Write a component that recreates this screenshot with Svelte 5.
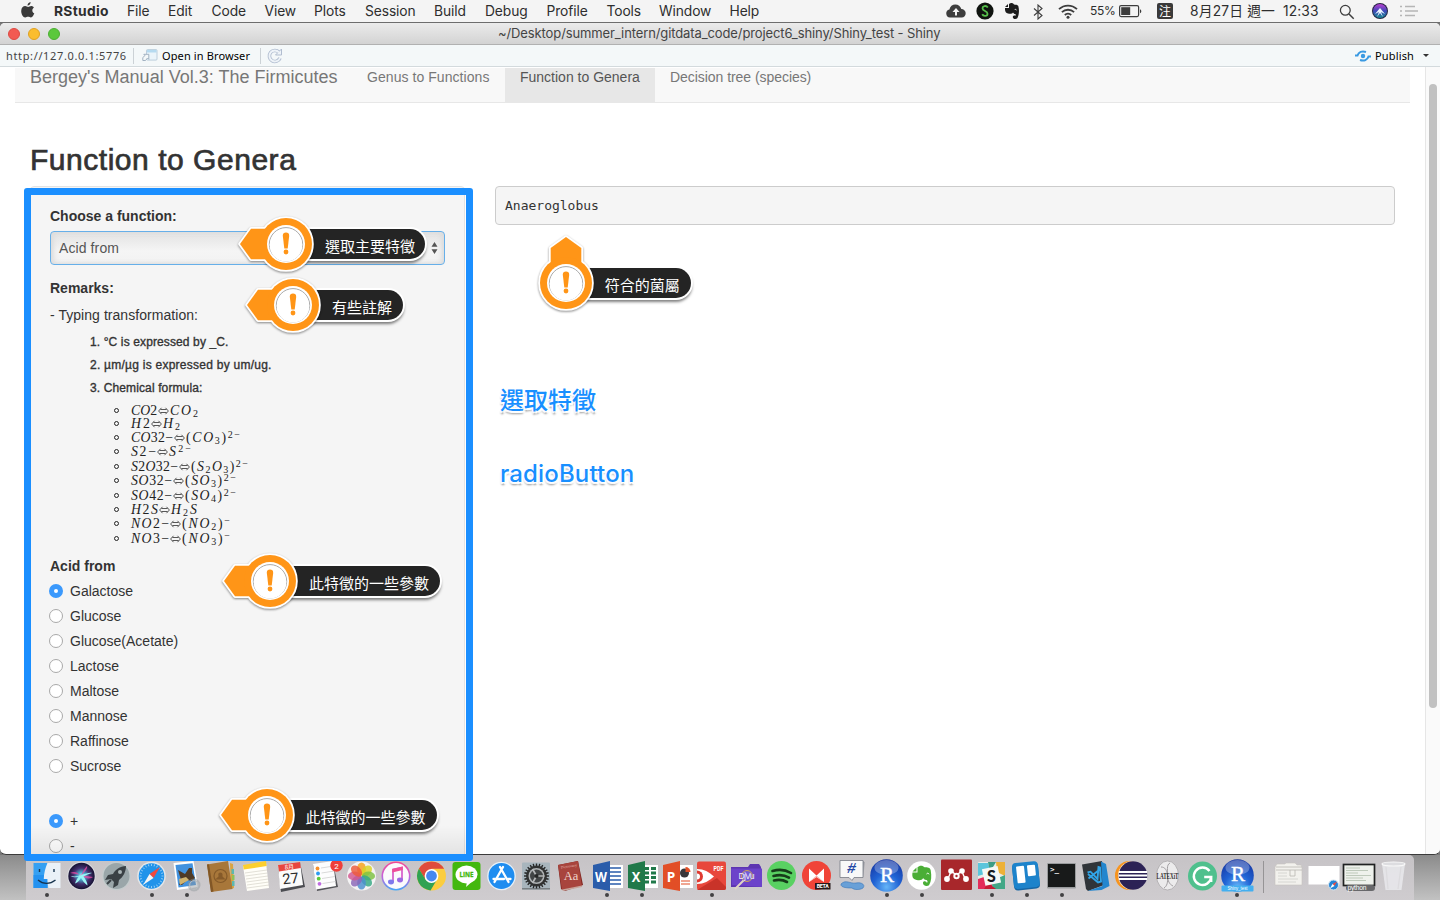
<script>
  const menus = [
    ['RStudio', 73], ['File', 41], ['Edit', 43.5], ['Code', 53], ['View', 49.5], ['Plots', 51],
    ['Session', 69], ['Build', 51], ['Debug', 61.5], ['Profile', 60], ['Tools', 52.5], ['Window', 70.5], ['Help', 40]
  ];
  const formulas = [
    { left: 'CO2', w: 26, right: 'CO_2', rw: 28, h: 13 },
    { left: 'H2', w: 19, right: 'H_2', rw: 17, h: 13.5 },
    { left: 'CO32−', w: 42, right: '(CO_3)^2^−', rw: 54, h: 14 },
    { left: 'S2−', w: 25, right: 'S^2^−', rw: 22, h: 14.5 },
    { left: 'S2O32−', w: 47, right: '(S_2O_3)^2^−', rw: 57, h: 14 },
    { left: 'SO32−', w: 41, right: '(SO_3)^2^−', rw: 51, h: 15 },
    { left: 'SO42−', w: 41, right: '(SO_4)^2^−', rw: 51, h: 14.5 },
    { left: 'H2S', w: 27, right: 'H_2S', rw: 26, h: 14 },
    { left: 'NO2−', w: 38, right: '(NO_2)^−', rw: 48, h: 14.5 },
    { left: 'NO3−', w: 38, right: '(NO_3)^−', rw: 48, h: 15 }
  ];
  const tokens = (s) =>
    [...s.matchAll(/([_^]?)(.)/gu)].map((m) => ({
      t: m[2],
      k: m[1] === '_' ? 'sub' : m[1] === '^' ? 'sup' : /[A-Z]/.test(m[2]) ? 'it' : 'up'
    }));
  const sugars = ['Galactose', 'Glucose', 'Glucose(Acetate)', 'Lactose', 'Maltose', 'Mannose', 'Raffinose', 'Sucrose'];
  let sugar = $state('Galactose');
  let sign = $state('+');
  const notes = [
    { x: 286, y: 244, text: '選取主要特徵', w: 131 },
    { x: 293, y: 305, text: '有些註解', w: 102 },
    { x: 270, y: 581, text: '此特徵的一些參數', w: 162 },
    { x: 266.5, y: 814.5, text: '此特徵的一些參數', w: 162 },
    { x: 565.7, y: 282.5, text: '符合的菌屬', w: 117, up: true }
  ];

  const siri = (id) => `<defs><radialGradient id="${id}"><stop offset="0" stop-color="#e8ffff"/><stop offset=".25" stop-color="#49b8d6"/><stop offset=".6" stop-color="#43306f"/><stop offset="1" stop-color="#161232"/></radialGradient></defs>`;
  const rball = (id, y, extra = '') => `<defs><radialGradient id="${id}" cx=".5" cy=".85" r=".9"><stop offset="0" stop-color="#65b5f8"/><stop offset=".45" stop-color="#2063d4"/><stop offset="1" stop-color="#15309b"/></radialGradient></defs><circle cx="17.500" cy="20.500" r="16.300" fill="url(#${id})"/><ellipse cx="17.500" cy="12.500" rx="12" ry="7.500" fill="#fff" opacity=".28"/><text x="18" y="${y}" font-size="21" font-family="Liberation Serif" fill="#fff" stroke="#fff" stroke-width=".4" text-anchor="middle">R</text>${extra}`;
  const office = (c, l, body) => `<path d="M17 10h17v23H17z" fill="#fff"/>${body}<path d="M4 10l17-4v30L4 33z" fill="${c}"/><text x="12" y="27" font-size="15" font-weight="700" font-family="Open Sans" fill="#fff" text-anchor="middle" textLength="${l === 'W' ? 12 : 8.5}" lengthAdjust="spacingAndGlyphs">${l}</text>`;
  const petals = ['#f7a21b', '#d9d425', '#7cc142', '#35a884', '#4a8fd0', '#8a66b8', '#d3558f', '#ee5a3a']
    .map((c, i) => `<ellipse cx="17.500" cy="14" rx="4.400" ry="6.600" fill="${c}" opacity=".82" transform="rotate(${i * 45} 17.500 21)"/>`).join('');
  const teeth = Array.from({ length: 24 }, (_, i) => `<path d="M16.800 8.500h1.400v3h-1.400z" transform="rotate(${i * 15} 17.500 21)"/>`).join('');
  const ticks = Array.from({ length: 24 }, (_, i) => `<path d="M17.500 9v2" transform="rotate(${i * 15} 17.500 21)"/>`).join('');

  const apps = [
    { name: 'Finder', run: true, svg: `<path d="M4.500 8h14v25h-14z" fill="#35a0f2"/><path d="M4.500 20h14v13h-14z" fill="#2492f0"/><path d="M18.500 8h13v25H19.500c-.8-3-1-6-1-9h-3.700c.1-6 1.500-11 3.700-16z" fill="#eaf1f8"/><path d="M10.500 14v3M25 14v3" stroke="#17344f" stroke-width="1.400"/><path d="M9 25c5 4.500 12 4.500 17.500 0" fill="none" stroke="#17344f" stroke-width="1.300"/>` },
    { name: 'Siri', svg: `${siri('s1')}<circle cx="17.500" cy="21" r="14.300" fill="#d9d9df"/><circle cx="17.500" cy="21" r="13.200" fill="url(#s1)"/><path d="M6 18c7-3 9 2 11 3 4-4 7-8 6-10-3 3-5 7-6 10 5 3 10 3 12 1" fill="#e24aa2" opacity=".8"/><path d="M6.500 21c5 1 8 0 11-1 4-1 8-3 10.500-2-3 1-6 2-8.500 3.500 2 3 4 6 4 9-3-2-5-5-6.500-8-1 2-3 5-6 6 1-3 2-5 4-7-3 1-6 1-8.500-.5z" fill="#9af5f5"/>` },
    { name: 'Launchpad', svg: `<circle cx="17.500" cy="21" r="14.300" fill="#c4cccd"/><circle cx="17.500" cy="21" r="13" fill="#9aa6a9"/><path d="M27 11c-6 0-11 4-13 8l-5 1-3 5 6-1 3 3-1 6 5-3 1-5c4-3 7-8 7-14z" fill="#3a4145"/><circle cx="21" cy="17" r="2" fill="#a9b4b6"/><path d="M12 25l-4 4" stroke="#3a4145" stroke-width="2"/>` },
    { name: 'Safari', run: true, svg: `<circle cx="17.500" cy="21" r="14.300" fill="#e4e6e8"/><circle cx="17.500" cy="21" r="12.800" fill="#2093ea"/><g stroke="#bfe2fa" stroke-width=".7">${ticks}</g><path d="M26 12l-6.500 11-4-4z" fill="#f2493d"/><path d="M9 30l6.500-11 4 4z" fill="#f5f5f5"/>` },
    { name: 'Mail', run: true, svg: `<path d="M4.500 8l20-2L29 32 8 35z" fill="#fff"/><path d="M6.500 10l17-1.800L27 30l-17.500 2.500z" fill="#4392de"/><path d="M9 15l7 4 4-6 3 0 0 5 3 5-3 3-5-1-5 5-3 0 2-5z" fill="#4f3a26"/><path d="M10 24l7-2 3 3-9 5z" fill="#d0b36f"/><circle cx="25" cy="30" r="6.500" fill="#8e969c" opacity=".45"/><circle cx="25" cy="30" r="4.300" fill="none" stroke="#b9bdc0" stroke-width="1"/>` },
    { name: 'Contacts', svg: `<path d="M26 8l3 1 1 24-3 1z" fill="#d9a441"/><path d="M27.500 14h2.500v5h-2.500zM28 26h2.500v5H28z" fill="#5cb8b0"/><path d="M28 20h2.500v5H28z" fill="#8fc15a"/><path d="M3 9.500L24 6l4.500 28L7 37z" fill="#a8773a"/><path d="M3 9.500l2-.3L9.500 36.600 7 37z" fill="#825726"/><circle cx="16.500" cy="21" r="6.500" fill="none" stroke="#855a29" stroke-width="1.200"/><path d="M12 24.500c0-2 3-2 2.500-4-1.500-4 5-4 4 0-.5 2 2.500 2 2.500 4z" fill="#855a29"/>` },
    { name: 'Notes', svg: `<path d="M4 11l23-3.500L30 33 8 36z" fill="#fffef8"/><path d="M4 10l23-4 .7 5L4.700 14.500z" fill="#fccf2e"/><path d="M6 18l22-3M6.500 21l22-3M7 24l22-3M7.500 27l22-3M8 30l22-3M8 33l22-3" stroke="#d5d2c8" stroke-width=".7"/>` },
    { name: 'Calendar', svg: `<path d="M4 11l22-4 5 25-24 5z" fill="#4c4d52"/><path d="M4 10l22-3 3 23-23 4z" fill="#fbfbfb"/><path d="M4 10l22-3 .8 6L5 16.500z" fill="#e8463e"/><text x="15.500" y="14" font-size="6" font-family="Noto Sans CJK TC" fill="#fff" text-anchor="middle" transform="rotate(-7 15.500 13)">8月</text><text x="16.500" y="28.500" font-size="14.500" font-family="Roboto" fill="#2b2b2b" text-anchor="middle" transform="rotate(-6 16.500 23)">27</text>` },
    { name: 'Reminders', svg: `<path d="M4 10l20-3 5 25-21 4z" fill="#55565a"/><path d="M4 9l20-3 3 25-20 3.500z" fill="#fdfdfd"/><path d="M12 13l13-2M12.500 18l13-2M13 23.500l13-2M13.500 28.500l13-2" stroke="#cfcfcf" stroke-width=".8"/><circle cx="8.500" cy="13.500" r="1.900" fill="#f7902b"/><circle cx="9" cy="18.500" r="1.900" fill="#2c9bf1"/><circle cx="9.700" cy="23.700" r="1.900" fill="#5dc93c"/><circle cx="10.500" cy="28.800" r="1.900" fill="#bf6be0"/><circle cx="27.500" cy="10.500" r="6.200" fill="#ee3f3b"/><text x="27.500" y="13.500" font-size="8" font-family="Roboto" fill="#fff" text-anchor="middle">2</text>` },
    { name: 'Photos', svg: `<circle cx="17.500" cy="21" r="14.500" fill="#f4f3f4"/>${petals}` },
    { name: 'iTunes', svg: `<defs><linearGradient id="it" x2="0" y2="1"><stop stop-color="#f5498f"/><stop offset=".5" stop-color="#c85edc"/><stop offset="1" stop-color="#45a9f5"/></linearGradient></defs><circle cx="17" cy="21" r="14.500" fill="url(#it)"/><circle cx="17" cy="21" r="12.900" fill="#fbfafc"/><path d="M14 27V14.500L23 12.500V25" fill="none" stroke="#d65ac9" stroke-width="1.700"/><path d="M13.200 14l10.600-2.400v3.400L13.200 17.400z" fill="#ee4f98"/><ellipse cx="12" cy="27" rx="3" ry="2.400" fill="#7f78ec"/><ellipse cx="21" cy="25" rx="3" ry="2.400" fill="#9c69e2"/>` },
    { name: 'Chrome', svg: `<circle cx="17.500" cy="21" r="14.500" fill="#fbcd3f"/><path d="M4.900 13.700a14.500 14.500 0 0 1 25.200 0H17.500L11 24z" fill="#df4b3c"/><path d="M4.900 13.700a14.500 14.500 0 0 0 11.600 21.700L23 24.500l-5.500 3-6-3z" fill="#30a253"/><circle cx="17.500" cy="21" r="6.900" fill="#fff"/><circle cx="17.500" cy="21" r="5.400" fill="#4688f1"/>` },
    { name: 'LINE', svg: `<rect x="3.500" y="7" width="28" height="28" rx="3" fill="#43b80f"/><ellipse cx="17.500" cy="19.500" rx="11" ry="9" fill="#fff"/><path d="M13 26l5 1-1 5 9-8" fill="#fff"/><text x="17.500" y="22" font-size="7" font-weight="700" font-family="Open Sans" fill="#43b80f" stroke="#43b80f" stroke-width=".3" text-anchor="middle" textLength="14" lengthAdjust="spacingAndGlyphs">LINE</text>` },
    { name: 'App Store', svg: `<circle cx="17.500" cy="21" r="14.300" fill="#e8f1f8"/><circle cx="17.500" cy="21" r="13" fill="#1f8df0"/><path d="M19 12l-8.500 15M16 12l8.500 15M9.500 24H20M22.500 24h4" stroke="#fff" stroke-width="2.300" stroke-linecap="round"/>` },
    { name: 'System Preferences', svg: `<rect x="3" y="7.500" width="28" height="27" rx="1" fill="#a8b5bd"/><rect x="3" y="33" width="28" height="1.500" fill="#787e82"/><g fill="#252626">${teeth}</g><circle cx="17.500" cy="21" r="10.500" fill="#303131"/><circle cx="17.500" cy="21" r="8" fill="#aeb2b4"/><circle cx="17.500" cy="21" r="6.500" fill="#424546"/><path d="M17.500 21h8M17.500 21l-4-7M17.500 21l-4 7" stroke="#b4b6b7" stroke-width="1.700"/><circle cx="17.500" cy="21" r="2" fill="#272828"/>` },
    { name: 'Dictionary', svg: `<path d="M4 10l20-4 5 24-18 6-4-2z" fill="#7e2520"/><path d="M4 10l20-4 4 25-20 4z" fill="#a8443d"/><path d="M8 34.500l20-4v1.500L9 36z" fill="#c9a59c"/><text x="17" y="25" font-size="12.500" font-family="Liberation Serif" fill="#f0d6cd" text-anchor="middle">Aa</text><text x="15" y="12.500" font-size="3.800" font-family="Liberation Serif" fill="#e6bdb5" text-anchor="middle" transform="rotate(-9 15 12)">Dictionary</text>` },
    { name: 'Word', run: true, svg: office('#2a5caa', 'W', '<path d="M20 13h12M20 17h12M20 21h12M20 25h12M20 29h12" stroke="#2a5caa" stroke-width="1.500"/>') },
    { name: 'Excel', run: true, svg: office('#21794a', 'X', '<path d="M21 12h4v3h-4zM27 12h5v3h-5zM21 16.500h4v3h-4zM27 16.500h5v3h-5zM21 21h4v3h-4zM27 21h5v3h-5zM21 25.500h4v3h-4zM27 25.500h5v3h-5z" fill="#21794a"/>') },
    { name: 'PowerPoint', svg: office('#e24e26', 'P', '<circle cx="25.500" cy="18" r="4.500" fill="#38363a"/><path d="M26.500 17v-5a5 5 0 0 1 5 5z" fill="#e24e26"/><path d="M22 26h9M22 29h9" stroke="#e24e26" stroke-width="1.200"/>') },
    { name: 'PDF Expert', run: true, svg: `<rect x="3" y="6.500" width="29" height="28.500" rx="2" fill="#e8473b"/><path d="M3 35l20-12 9 9v1a2 2 0 0 1-2 2z" fill="#c93329"/><path d="M3 14c7 0 12 3 17 7.500C15 26 10 29 3 29z" fill="#fff"/><path d="M3 15.500a6 6 0 0 1 0 12z" fill="#e03a31"/><path d="M3 18.500a3 3 0 0 1 0 6z" fill="#fff"/><text x="24.500" y="15.500" font-size="7" font-weight="700" font-family="Roboto" fill="#fff" text-anchor="middle" textLength="10" lengthAdjust="spacingAndGlyphs">PDF</text>` },
    { name: 'DjView', svg: `<path d="M2 12h17l2-3h9l2 3v20H2z" fill="#5d35b1"/><path d="M2 13.500h31v18.500L3 30z" fill="#6c43ca"/><path d="M15 25L6 34" stroke="#e1d5c4" stroke-width="2"/><ellipse cx="18" cy="21" rx="5.500" ry="5.500" fill="#725bd7" stroke="#c9a45c"/><text x="17.500" y="24" font-size="8.500" font-family="Liberation Sans" fill="#f1ecf6" text-anchor="middle" textLength="16">DjVu</text>` },
    { name: 'Spotify', svg: `<circle cx="17.500" cy="20.500" r="14.500" fill="#59d162"/><path d="M8.500 16c6.500-2 13-1.300 18.500 2M9.500 21c5.500-1.500 11-1 15.500 1.700M10 25.500c5-1.200 9-.8 13 1.500" fill="none" stroke="#163d1a" stroke-width="2.600" stroke-linecap="round"/>` },
    { name: 'Mosaic', svg: `<circle cx="17.500" cy="20.500" r="14.500" fill="#f04438"/><path d="M10 27V13.500l7.500 7 7.500-7V27l-7.500-5z" fill="#fff"/><path d="M10 27l7.500-6.500L25 27l-7.500-5z" fill="#f5b3ae"/><rect x="16" y="28" width="15.500" height="6.500" fill="#27191a"/><text x="23.700" y="33.200" font-size="5.300" font-weight="700" font-family="Roboto" fill="#fff" text-anchor="middle" textLength="12">BETA</text>` },
    { name: 'Irc', svg: `<path d="M6 5.500h23v17h-9l-2 3-3-3H6z" fill="#f8f8f8" stroke="#777b85" stroke-width=".8"/><path d="M29 5.500l1.500 2-1 15z" fill="#8b8e96"/><text x="17.500" y="18" font-size="15" font-weight="700" font-style="italic" font-family="Liberation Mono" fill="#2348a5" text-anchor="middle">#</text><path d="M7 29c5-5 9 0 15-1 4-1 10 1 7 5-3 2-9 2-11 0-3 0-12 0-11-4z" fill="#69a0d7" stroke="#3573b8" stroke-width=".6"/>` },
    { name: 'RStudio', run: true, svg: rball('rb1', 27) },
    { name: 'Evernote', run: true, svg: `<circle cx="17.500" cy="20.500" r="14.300" fill="#fff"/><path d="M8.500 17.500h5v-5.200c2-2.300 5.500-2 7 0 3 0 5.500 0 6.200 3 1 5.700.8 11-1.700 15-2 1.200-6.500.8-6-2.800.5-2 4-1.400 3.800.6 1.500-1 .5-3-.6-3-1.700-.2-2.500-1-3-2-1 2.500-4 2.500-6.500 1.900-4.200-1-4.800-3.500-4.200-7.500z" fill="#4aae36"/><path d="M8.500 16.500l4-4v4z" fill="#4aae36"/><path d="M22.500 19c.8-1.200 2.200-1 2.500.3" stroke="#fff" fill="none"/>` },
    { name: 'Mendeley', svg: `<rect x="2" y="4.500" width="31" height="30.500" rx="1" fill="#a8272b"/><path d="M8 24c2.500-2 3-5 4-8.500l5.500 5 5.500-5c1 3.500 1.500 6.500 4 8.500" stroke="#fff" stroke-width="1.400" fill="none"/><g fill="#fff"><circle cx="12" cy="16" r="2.800"/><circle cx="23" cy="16" r="2.800"/><circle cx="17.500" cy="21" r="3.200"/><circle cx="8" cy="24" r="2.900"/><circle cx="27" cy="24" r="2.900"/><circle cx="17.500" cy="21" r="1.200" fill="#a8272b"/></g>` },
    { name: 'Slack', run: true, svg: `<rect x="4" y="7" width="27" height="27" rx="1" fill="#e9ece8"/><path d="M4 8h10l3 9-13 4z" fill="#5bc5dc"/><path d="M14 7h8l-6 10z" fill="#3e9d86"/><path d="M22 7h9v14l-8-4z" fill="#edb137"/><path d="M4 24l12-4 3 14H4z" fill="#e32c59"/><path d="M19 34l-2-8 14-6v14z" fill="#43a787"/><path d="M10 34l4-6 8 6z" fill="#c61c34"/><rect x="9.500" y="12.500" width="16" height="17" fill="#f6f8f6" transform="rotate(-12 17 21)"/><text x="17.500" y="26.500" font-size="16" font-weight="900" font-family="Lato" fill="#18191d" text-anchor="middle">S</text>` },
    { name: 'Trello', run: true, svg: `<g transform="rotate(-6 17.500 21)"><rect x="4" y="8.500" width="26" height="26" rx="4" fill="#1766a4"/><rect x="4" y="7" width="26" height="26" rx="4" fill="#1d83cb"/><rect x="8" y="10.500" width="8" height="17" rx="1" fill="#fff"/><rect x="19" y="10.500" width="8" height="11" rx="1" fill="#fff"/></g>` },
    { name: 'Terminal', run: true, svg: `<rect x="3" y="8" width="29" height="25.500" rx="1" fill="#999b9d"/><rect x="4" y="9" width="27" height="23" fill="#181a1a"/><text x="6" y="16.500" font-size="7.500" font-weight="700" font-family="DejaVu Sans Mono" fill="#fff">&gt;_</text>` },
    { name: 'VS Code', svg: `<path d="M3 9.500L23 6l2 24-16 6-2-2z" fill="#303439"/><path d="M22 6.500l5 2.500 3.500 22-8 4-14 1 15-5z" fill="#2386ce"/><path d="M8.500 17.500l3-.8 7 7.300 1-12 1.500.5 1 14-3 1-10-8.500M20 15l-10.500 8.500" fill="none" stroke="#31a4e7" stroke-width="1.900"/>` },
    { name: 'Eclipse', svg: `<circle cx="15.500" cy="20.500" r="14.500" fill="#f7941e"/><circle cx="18.500" cy="20.500" r="14.500" fill="#fff" opacity=".75"/><circle cx="19" cy="20.500" r="14.300" fill="#2c2255"/><path d="M5 17h28M4.700 20.500h28.600M5 24h28" stroke="#fff" stroke-width="1.800"/>` },
    { name: 'LaTeXiT', svg: `<ellipse cx="17.500" cy="20.500" rx="11" ry="14.500" fill="#ecebec" stroke="#aaa7aa" stroke-width=".8"/><path d="M20 8c-4 2-2 8-2.500 12.500M11 12c4 0 6 3 6.500 8.500M14 33c3-2 4-5 3.500-12.500M23 31c-4-2-5-5-5.500-10" stroke="#a29fa2" fill="none"/><text x="17.500" y="24" font-size="7.500" font-weight="700" font-family="Liberation Serif" fill="#302e30" text-anchor="middle" textLength="22" lengthAdjust="spacingAndGlyphs">LATEXiT</text>` },
    { name: 'Grammarly', svg: `<circle cx="17.500" cy="21" r="14.500" fill="#4fc08d"/><path d="M24.500 16a8.700 8.700 0 1 0 1.700 6h-7M26.200 22v5" fill="none" stroke="#fff" stroke-width="2.400"/>` },
    { name: 'Shiny_test', run: true, svg: rball('rb2', 26, '<rect x="1.500" y="30.500" width="32" height="6" rx="1" fill="#43aff0"/><text x="17.500" y="35.300" font-size="5.500" font-family="Liberation Sans" fill="#fff" text-anchor="middle" textLength="20" lengthAdjust="spacingAndGlyphs">Shiny_test</text>') }
  ];
  const files = [
    { name: 'Documents', svg: `<path d="M4 12l2-3h8l1-1h9l2 2h4l1 2v18H4z" fill="#f2f1ed" stroke="#c7c5c0" stroke-width=".6"/><path d="M5 12h26M5 15h26M19 15v6h5v-6" stroke="#b9b7b1" stroke-width=".8" fill="none"/><path d="M7 18h9M7 21h9M7 24h20M7 27h18" stroke="#d3d4cf" stroke-width=".9"/>` },
    { name: 'Browser window', svg: `<rect x="2.500" y="11" width="31" height="18.500" fill="#fff"/><circle cx="27.500" cy="30" r="5" fill="#2486d8" stroke="#d4e3ed"/><path d="M31 26.500l-2.500 4.500-2-2z" fill="#f04a3e"/><path d="M24 33.500l2.500-4.500 2 2z" fill="#fff"/>` },
    { name: 'python', svg: `<rect x="2.500" y="9.500" width="31" height="21" fill="#eef1ec" stroke="#202222" stroke-width="1.700"/><path d="M5 13h14M5 15.500h22M5 18h12M5 20.500h25M5 23h17M5 25.500h20" stroke="#a9b8a6" stroke-width=".7"/><rect x="5" y="30" width="29" height="6" rx="3" fill="#68686b"/><text x="16" y="35" font-size="6.700" font-family="Liberation Sans" fill="#fff" text-anchor="middle" textLength="19">python</text>` },
    { name: 'Trash', svg: `<path d="M6 9h23l-3.500 26h-16z" fill="#e6e6e9" opacity=".95"/><path d="M10 12l2 22M25 12l-3 22" stroke="#dcdbde" stroke-width="1.300"/><ellipse cx="17.500" cy="9" rx="11.500" ry="2" fill="#dddde0" stroke="#f8f8f8" stroke-width="1.200"/>` }
  ];
</script>

{#snippet math(s)}{#each tokens(s) as p}<i class={p.k}>{p.t}</i>{/each}{/snippet}

{#snippet radio(label, on, pick)}
  <label class="radio">
    <input type="radio" checked={on} onchange={pick} />
    <span class="knob"></span>{label}
  </label>
{/snippet}

<div class="desktop">
  <header class="menubar">
    <svg class="apple" viewBox="0 0 14 17"><path fill="#3a3a3a" d="M9.600 0c.2 1.700-1.300 3.600-3.100 3.600C6.300 2 7.900.2 9.600 0zM12.900 5.700c-2.300 1.400-2 4.600.4 5.600-.5 1.500-1.800 4.200-3.400 4.200-1.100 0-1.500-.7-2.800-.7s-1.800.7-2.800.7C2.200 15.600.2 12.100.2 9c0-3.300 2-4.900 4-4.900 1.200 0 2.200.8 3 .8.7 0 1.900-.9 3.400-.8 1 .1 1.800.6 2.300 1.600z"/></svg>
    <nav class="menus">
      {#each menus as [name, w]}<span style:width="{w}px">{name}</span>{/each}
    </nav>
    <div class="status">
      <svg class="s-cloud" width="20" height="14" viewBox="0 0 20 14"><path fill="#3d3d3d" d="M4 13.500a4 4 0 0 1-.6-7.900C4 2.500 6.500.6 9.300.6c3 0 5.300 1.900 6 4.500a4.200 4.200 0 0 1 .4 8.400z"/><path fill="#f4f4f4" d="M10 4l3.500 4H11v3.500H9V8H6.500z"/></svg>
      <svg class="s-green" width="18" height="18" viewBox="0 0 18 18"><circle cx="9" cy="9" r="8.600" fill="#101410"/><path d="M11.800 5.500C10 3 6.500 4 6.500 6.300c0 3 5 2.500 5 5.400 0 2.600-4 3-5.300.6" fill="none" stroke="#57c04c" stroke-width="1.800"/></svg>
      <svg class="s-ever" width="14" height="17" viewBox="0 0 14 17"><path fill="#1c1c1c" d="M0 5h4V1c2-1.500 4-1 5 .5 2 .2 3.700.3 4.300 1.500 1.200 4.500.7 9-1 12.300-1.300 1-4.500.9-4.500-1.400 0-1.500 2-1.900 2.800-1v-2c-1.300.3-2-.6-2.600-1.500-1 1.700-3 1.600-5 1.100C.5 9.800-.2 8 0 5zM0 4l3-3v3z"/><path d="M9.500 7c.5-1 1.800-.8 2 .3" stroke="#f4f4f4" stroke-width=".8" fill="none"/></svg>
      <svg class="s-bt" width="10" height="16" viewBox="0 0 10 16"><path d="M1 4.500l8 7L5 15V1l4 3.500-8 7" fill="none" stroke="#3d3d3d" stroke-width="1.100"/></svg>
      <svg class="s-wifi" width="20" height="15" viewBox="0 0 20 15"><g fill="none" stroke="#3d3d3d" stroke-width="1.800"><path d="M1 5.200a13 13 0 0 1 18 0M3.900 8.200a8.800 8.800 0 0 1 12.200 0M6.800 11a4.700 4.700 0 0 1 6.400 0"/></g><circle cx="10" cy="13.300" r="1.500" fill="#3d3d3d"/></svg>
      <span class="pct">55%</span>
      <svg class="s-batt" width="24" height="13" viewBox="0 0 24 13"><rect x=".6" y=".6" width="19" height="11" rx="1.500" fill="none" stroke="#3d3d3d" stroke-width="1.200"/><path d="M2.200 2.200h9v7.800h-9z" fill="#3d3d3d"/><path d="M21 4.200c1.800.8 1.800 3.200 0 4z" fill="#3d3d3d"/></svg>
      <span class="ime">注</span>
      <span class="date">8月27日 週一</span>
      <span class="clock">12:33</span>
      <svg class="s-find" width="16" height="16" viewBox="0 0 16 16"><circle cx="6.300" cy="6.300" r="4.900" fill="none" stroke="#3d3d3d" stroke-width="1.300"/><path d="M10 10l4.700 4.700" stroke="#3d3d3d" stroke-width="1.500"/></svg>
      <svg class="s-siri" width="16" height="16" viewBox="0 0 16 16"><defs><linearGradient id="ms" x2="0" y2="1"><stop stop-color="#ba3ed0"/><stop offset=".5" stop-color="#3e4ab8"/><stop offset="1" stop-color="#15888f"/></linearGradient></defs><circle cx="8" cy="8" r="8" fill="#252445"/><circle cx="8" cy="8" r="7" fill="url(#ms)"/><path d="M8 5l5 6-4-2 2 5-3-4-3 4 2-5-4 2z" fill="#eaf5ff"/></svg>
      <svg class="s-list" width="18" height="12" viewBox="0 0 18 12"><path d="M0 1.500h2M5 1.500h10M0 6h2M5 6h13M0 10.500h2M5 10.500h10" stroke="#b5b5b5" stroke-width="1.500"/></svg>
    </div>
  </header>

  <section class="window">
    <div class="titlebar">
      <div class="lights"><b></b><b></b><b></b></div>
      <span>~/Desktop/summer_intern/gitdata_code/project6_shiny/Shiny_test - Shiny</span>
    </div>
    <div class="toolbar">
      <span class="url">http://127.0.0.1:5776</span>
      <span class="rule"></span>
      <svg class="openicon" width="16" height="13" viewBox="0 0 16 13"><rect x="4.500" y=".6" width="10.500" height="10.500" rx="1" fill="#eaf4fa" stroke="#b7c9d9" stroke-width=".9"/><path d="M5 1h9.500v2.500H5z" fill="#b5daf0"/><path d="M.8 11.500V8.500l2.200-2L1.800 5.300h5v5L5.500 9l-2 2.500z" fill="#f4f8f9" stroke="#9aaabb" stroke-width=".9"/></svg>
      <span class="open">Open in Browser</span>
      <span class="rule r2"></span>
      <svg class="reload" width="16" height="16" viewBox="0 0 16 16"><path d="M12 4.300A5.500 5.500 0 1 0 13 10" fill="none" stroke="#b1bdd0" stroke-width="3.600"/><path d="M14.500 1v6H8.500z" fill="#eef3f8" stroke="#b1bdd0"/><path d="M12 4.300A5.500 5.500 0 1 0 13 10" fill="none" stroke="#eef3f8" stroke-width="1.900"/></svg>
      <svg class="pubicon" width="16" height="12" viewBox="0 0 16 12"><g fill="none" stroke="#3a9ae2" stroke-width="2"><path d="M0 5.500h2.500C3.500 2 7 .6 11 2M16 6.500h-2.500c-1 3.500-4.500 4.900-8.500 3.500"/></g><circle cx="8" cy="6" r="2.200" fill="#3a9ae2"/></svg>
      <span class="publish">Publish</span>
      <span class="caret"></span>
    </div>

    <div class="page">
      <main>
        <div class="navbar">
          <span class="brand">Bergey's Manual Vol.3: The Firmicutes</span>
          <span class="tab t1">Genus to Functions</span>
          <span class="tab t2 active">Function to Genera</span>
          <span class="tab t3">Decision tree (species)</span>
        </div>
        <h2>Function to Genera</h2>
        <div class="cols">
          <div class="well">
            <strong class="lbl">Choose a function:</strong>
            <div class="select"><span>Acid from</span>
              <svg width="7" height="12" viewBox="0 0 7 12"><path d="M3.500 0l3 4.800h-6zM3.500 12l3-4.800h-6z" fill="#555"/></svg>
            </div>
            <strong class="lbl remarks">Remarks:</strong>
            <p class="typing">- Typing transformation:</p>
            <div class="steps">
              <div>1. °C is expressed by _C.</div>
              <div class="wide">2. µm/µg is expressed by um/ug.</div>
              <div>3. Chemical formula:</div>
            </div>
            <div class="formulas">
              {#each formulas as f}
                <div class="formula" style:height="{f.h}px">
                  <b class="dot"></b>
                  <span class="eq" style:width="{f.w}px">{@render math(f.left)}</span>
                  <svg width="11" height="8" viewBox="0 0 11 8"><path d="M2.500 2.500h6M2.500 5.500h6M3.500.8L.6 4l2.900 3.200M7.500.8L10.400 4 7.500 7.200" fill="none" stroke="#222" stroke-width=".75"/></svg>
                  <span class="eq" style:width="{f.rw}px">{@render math(f.right)}</span>
                </div>
              {/each}
            </div>
            <strong class="lbl acid">Acid from</strong>
            <div class="group">
              {#each sugars as s}{@render radio(s, sugar === s, () => (sugar = s))}{/each}
            </div>
            <div class="group second">
              {#each ['+', '-'] as s}{@render radio(s, sign === s, () => (sign = s))}{/each}
            </div>
          </div>
          <pre>Anaeroglobus</pre>
        </div>
      </main>
      <div class="scroll"><div class="thumb"></div></div>
    </div>
  </section>

  <footer class="dockrow">
    <div class="dock">
      {#each apps as a}
        <div class="app">
          <svg viewBox="0 0 35 38" role="img" aria-label={a.name}>{@html a.svg}</svg>
          {#if a.run}<b></b>{/if}
        </div>
      {/each}
      <span class="sep"></span>
      {#each files as a}
        <div class="app"><svg viewBox="0 0 35 38" role="img" aria-label={a.name}>{@html a.svg}</svg></div>
      {/each}
    </div>
  </footer>

  <div class="frame"></div>
  <div class="big zh">選取特徵</div>
  <div class="big en">radioButton</div>
  {#each notes as n}
    <div class="note" style:left="{n.x}px" style:top="{n.y}px">
      <div class="pill" style:width="{n.w}px"><span>{n.text}</span></div>
      <svg width="100" height="100" viewBox="-50 -50 100 100">
        <g class="shape">
          <g stroke="#fff" stroke-width="3.600" stroke-linejoin="round" fill="#fff">
            <path d="M-46 0l11-15.300H-10v30.600h-25z" transform={n.up ? 'rotate(90)' : ''} />
            <circle r="26" />
          </g>
          <path d="M-46 0l11-15.300H-10v30.600h-25z" fill="#ff9517" transform={n.up ? 'rotate(90)' : ''} />
          <circle r="26" fill="#ff9517" />
        </g>
        <circle r="19" fill="#fff" />
        <circle cy=".3" r="16.700" fill="#fff" stroke="#aaa" stroke-width="1" />
        <circle cy="1.200" r="16.300" fill="#fff" />
        <path d="M-3.200-8.300a3.200 3.200 0 0 1 6.400 0L1.700 4.500h-3.400z" fill="#ff9517" />
        <circle cy="8" r="2.400" fill="#ff9517" />
      </svg>
    </div>
  {/each}
</div>

<style>
  :global(body) { margin: 0; }
  .desktop { position: relative; width: 1440px; height: 900px; overflow: hidden; display: flex; flex-direction: column; background: #777; font-family: "Liberation Sans", "Noto Sans CJK TC", sans-serif; color: #333; }
  svg { display: block; flex: none; }
  span { white-space: nowrap; }

  .menubar { height: 22px; flex: none; display: flex; align-items: center; background: #f4f4f4; border-bottom: 1px solid #6d6d6d; box-sizing: content-box; font: 13.800px/22px Inter, "Noto Sans CJK TC", sans-serif; color: #2e2e2e; }
  .apple { width: 14px; height: 17px; margin: 0 19px 2px 21px; }
  .menus { display: flex; letter-spacing: -.1px; }
  .menus span:first-child { font-weight: 700; letter-spacing: .3px; }
  .status { margin-left: auto; display: flex; align-items: center; }
  .s-green { margin-left: 10px; }
  .s-ever { margin-left: 11px; }
  .s-bt { margin-left: 14px; margin-top: 2px; }
  .s-wifi { margin-left: 15px; }
  .pct { font-size: 12px; margin-left: 12px; width: 29px; letter-spacing: -.3px; }
  .s-batt { margin-left: 0; }
  .ime { width: 16px; height: 16px; margin-left: 14px; background: #3a3a3a; color: #fff; border-radius: 2px; font: 12px/16px "Noto Sans CJK TC", sans-serif; text-align: center; }
  .date { width: 86px; margin-left: 17px; letter-spacing: .15px; }
  .clock { width: 37px; margin-left: 7px; letter-spacing: .1px; }
  .s-find { margin-left: 19px; margin-top: 1px; }
  .s-siri { margin-left: 17px; }
  .s-list { margin: 0 22px 0 12px; }

  .window { height: 832px; flex: none; display: flex; flex-direction: column; background: #fff; border-radius: 5px 5px 6px 6px; overflow: hidden; border-bottom: 1px solid #3b3b3b; box-sizing: border-box; }
  .titlebar { height: 21px; flex: none; border-bottom: 1px solid #b1b1b1; background: linear-gradient(#ebebeb, #d3d3d3); display: flex; align-items: center; font: 13px/21px Inter, sans-serif; color: #444; }
  .lights { display: flex; gap: 8px; padding-left: 8px; width: 490px; box-sizing: border-box; }
  .lights b { width: 12px; height: 12px; box-sizing: border-box; border-radius: 50%; background: #f25a52; border: 1px solid #dc4a43; }
  .lights b:nth-child(2) { background: #fabd2f; border-color: #dfa023; }
  .lights b:nth-child(3) { background: #5bc83c; border-color: #4cae33; }
  .titlebar span { margin-left: 8px; letter-spacing: -.11px; }

  .toolbar { height: 21px; flex: none; display: flex; align-items: center; background: #f4f8f9; border-bottom: 1px solid #d3dadd; font: 11px/21px "Noto Sans", sans-serif; color: #000; }
  .url { margin-left: 6px; width: 127px; color: #444; letter-spacing: .64px; }
  .rule { width: 1px; height: 16px; background: #ccd2d6; }
  .openicon { margin-left: 8px; }
  .open { margin-left: 4px; width: 98px; letter-spacing: .12px; }
  .reload { margin-left: 6px; }
  .pubicon { margin-left: auto; }
  .publish { margin-left: 4px; width: 48px; letter-spacing: .15px; }
  .caret { border: 3px solid transparent; border-top-color: #333; border-bottom: 0; margin-right: 11px; }

  .page { flex: 1; min-height: 0; display: flex; }
  main { flex: 1; min-width: 0; padding: 1px 15px 0; overflow: hidden; }
  .scroll { width: 15px; flex: none; border-left: 1px solid #e6e6e6; background: #fafafa; padding: 17px 0 0 3px; box-sizing: border-box; }
  .thumb { width: 8px; height: 624px; border-radius: 4px; background: #c1c1c1; }

  .navbar { height: 34px; display: flex; background: #f8f8f8; border-bottom: 1px solid #e7e7e7; color: #777; font-size: 14px; line-height: 18px; }
  .brand { font-size: 18px; width: 322px; padding-left: 15px; letter-spacing: .01px; }
  .tab { padding: 0 15px; box-sizing: border-box; }
  .t1 { width: 153px; letter-spacing: .06px; }
  .t2 { width: 150px; }
  .t3 { letter-spacing: -.05px; }
  .active { background: #e7e7e7; color: #555; }
  h2 { margin: 40px 0 0 15px; font-size: 30px; line-height: 33px; font-weight: 400; -webkit-text-stroke: .7px #333; letter-spacing: .53px; height: 44px; }

  .cols { display: flex; gap: 20px; align-items: flex-start; margin: 0 15px; }
  .well { width: 395px; padding: 19px; height: 760px; background: #f5f5f5; border: 1px solid #e3e3e3; border-radius: 4px; margin-top: -1px; }
  pre { flex: 1; height: 37px; margin: -1px 0 0 10px; padding: 0 9px; border: 1px solid #ccc; border-radius: 4px; background: #f5f5f5; font: 13px/37px "DejaVu Sans Mono", monospace; color: #333; }
  .lbl { display: block; font-size: 14px; line-height: 20px; }
  .select { margin-top: 5px; height: 34px; box-sizing: border-box; border: 1px solid #66afe9; border-radius: 4px; display: flex; align-items: center; justify-content: space-between; padding: 0 6px 0 8px; font-size: 14px; color: #555; letter-spacing: .1px; background: linear-gradient(#e2e2e2, #f5f5f5 60%, #f2f2f2); box-shadow: inset 3px 0 5px #ddd, inset -3px 0 5px #ddd; }
  .remarks { margin-top: 13px; }
  .typing { margin: 7px 0 0; font-size: 14px; line-height: 20px; letter-spacing: .05px; }
  .steps { padding: 6px 0 0 40px; font-size: 12px; line-height: 23px; -webkit-text-stroke: .35px #333; letter-spacing: .12px; }
  .wide { letter-spacing: .25px; }
  .formulas { padding: 4px 0 0 64px; }
  .formula { display: flex; align-items: center; color: #222; }
  .dot { width: 5px; height: 5px; box-sizing: border-box; border: 1px solid #222; border-radius: 50%; margin-right: 12px; }
  .eq { display: flex; justify-content: space-between; align-items: baseline; font: 13.800px/13px "Liberation Serif", serif; }
  .formula svg { margin: 1px 1px 0; }
  .eq i { font-style: normal; }
  .eq .it { font-style: italic; }
  .eq .sub { font-size: 10px; line-height: 1px; position: relative; top: 2px; }
  .eq .sup { font-size: 10px; line-height: 1px; position: relative; top: -4px; }
  .acid { margin-top: 10px; }
  .group { display: flex; flex-direction: column; gap: 5px; margin-top: 5px; }
  .second { margin-top: 35px; }
  .radio { display: flex; align-items: center; height: 20px; font-size: 14px; line-height: 20px; }
  .radio input { position: absolute; opacity: 0; }
  .knob { width: 14px; height: 14px; box-sizing: border-box; margin: 0 7px 0 -1px; border: 1px solid #a9a9a9; border-radius: 50%; background: #fff; }
  input:checked + .knob { border: 5px solid #3b99fc; }

  .dockrow { flex: 1; display: flex; background: linear-gradient(#8b8b8b, #c2c2c2); padding: 0 26px; }
  .dock { flex: 1; display: flex; padding-left: 3px; background: linear-gradient(#c6c3c6, #cfcccf); border-radius: 0 5px 0 0; }
  .app { width: 35.030px; flex: none; display: flex; flex-direction: column; align-items: center; }
  .app svg { width: 35px; height: 38px; overflow: visible; }
  .app b { width: 4px; height: 4px; border-radius: 50%; background: #424143; }
  .sep { width: 1px; height: 32px; background: #969496; margin: 6px 7px 0 8px; }

  .frame { position: absolute; left: 24px; top: 188px; width: 449px; height: 673px; box-sizing: border-box; border: 7px solid #1b8fff; border-radius: 3px; background: linear-gradient(transparent 630px, rgba(0, 0, 0, .07)); }
  .big { position: absolute; left: 500px; color: #188fff; font: 500 24px/30px Inter, "Noto Sans CJK TC", sans-serif; white-space: nowrap; text-shadow: 1px 0 #fff, -1px 0 #fff, 0 1px #fff, 0 -1px #fff, 2px 2px 1px #fff, -1px 2px 1px #fff, 0 3px 2px #888; }
  .zh { top: 386px; }
  .en { top: 458.500px; letter-spacing: .15px; }
  .note { position: absolute; width: 0; height: 0; }
  .note svg { position: absolute; left: -50px; top: -50px; }
  .shape { filter: drop-shadow(0 1.500px 1px rgba(0, 0, 0, .45)); }
  .pill { position: absolute; left: 8px; top: -15px; height: 30px; box-sizing: border-box; padding-left: 31px; border-radius: 0 15px 15px 0; background: #242424; box-shadow: 0 0 0 2px #fff, 0 3px 3px 1px rgba(0, 0, 0, .5); color: #fff; font: 15px/33px "Noto Sans CJK TC", sans-serif; }
</style>
